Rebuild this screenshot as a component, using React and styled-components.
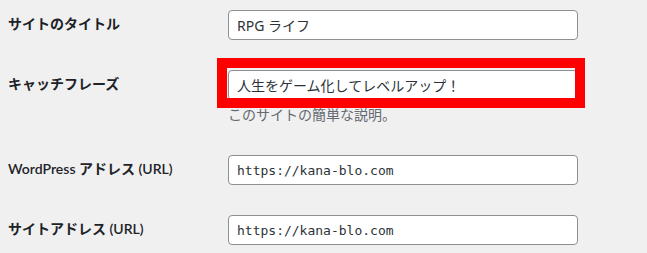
import React from 'react';
import styled, { createGlobalStyle } from 'styled-components';

const GlobalStyle = createGlobalStyle`
  html, body {
    margin: 0;
    padding: 0;
    background: #f0f0f1;
  }
  body {
    font-family: "Noto Sans", "Noto Sans CJK JP", sans-serif;
    font-size: 14px;
    color: #1d2327;
  }
`;

const Page = styled.div`
  width: 647px;
  height: 253px;
  overflow: hidden;
  padding-left: 8px;
  box-sizing: border-box;
`;

const FormTable = styled.div`
  display: grid;
  grid-template-columns: 220px 1fr;
  margin-top: -5px;
`;

const Label = styled.label`
  padding: 20px 10px 20px 0;
  line-height: 1.3;
  font-family: "Lato", "Noto Sans CJK JP", sans-serif;
  font-weight: 600;
  font-size: 14px;
  color: #1d2327;
`;

const Field = styled.div`
  padding: 15px 0;
  position: relative;
`;

const InputWrap = styled.div`
  position: relative;
  width: 350px;
`;

const TextInput = styled.input`
  display: block;
  box-sizing: border-box;
  width: 350px;
  height: 30px;
  margin: 0;
  padding: 0 8px;
  border: 1px solid #8c8f94;
  border-radius: 4px;
  background: #fff;
  color: #2c3338;
  font-family: ${p => (p.mono ? '"DejaVu Sans Mono", monospace' : '"Noto Sans", "Noto Sans CJK JP", sans-serif')};
  font-size: ${p => (p.mono ? '13px' : '14px')};
  line-height: 28px;
  outline: none;
`;

const Highlight = styled.div`
  position: absolute;
  top: -12px;
  left: -11px;
  width: 368px;
  height: 50px;
  box-sizing: border-box;
  border: 10px solid #ff0000;
  pointer-events: none;
`;

const Description = styled.p`
  margin: 4px 0 0;
  font-size: 14px;
  line-height: 1.5;
  color: #646970;
`;

const rows = [
  { id: 'blogname', label: 'サイトのタイトル', value: 'RPG ライフ' },
  {
    id: 'blogdescription',
    label: 'キャッチフレーズ',
    value: '人生をゲーム化してレベルアップ！',
    note: 'このサイトの簡単な説明。',
    marked: true
  },
  { id: 'siteurl', label: 'WordPress アドレス (URL)', value: 'https://kana-blo.com', mono: true },
  { id: 'home', label: 'サイトアドレス (URL)', value: 'https://kana-blo.com', mono: true }
];

export default function App() {
  return (
    <Page>
      <GlobalStyle />
      <FormTable>
        {rows.map(row => (
          <React.Fragment key={row.id}>
            <Label htmlFor={row.id}>{row.label}</Label>
            <Field>
              <InputWrap>
                <TextInput id={row.id} mono={row.mono} defaultValue={row.value} />
                {row.marked && <Highlight />}
              </InputWrap>
              {row.note && <Description>{row.note}</Description>}
            </Field>
          </React.Fragment>
        ))}
      </FormTable>
    </Page>
  );
}
